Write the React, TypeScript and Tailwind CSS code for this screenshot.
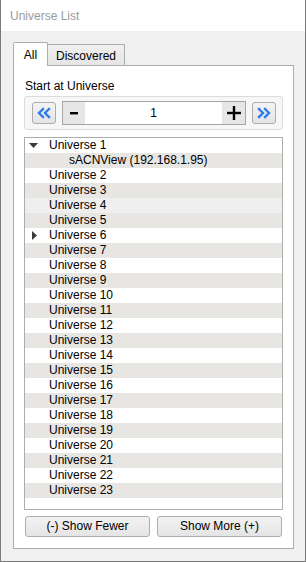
import React from 'react'

const universes = Array.from({ length: 23 }, (_, i) => i + 1)

function DoubleChevron({ dir }: { dir: 'left' | 'right' }) {
 const flip = dir === 'left' ? 'scale(-1,1) translate(-14,0)' : undefined
 return (
  <svg width="14" height="12" viewBox="0 0 14 12">
   <g transform={flip} fill="none" stroke="#2f7be8" strokeWidth="2.4" strokeLinecap="square">
    <path d="M2 2 L6 6 L2 10" />
    <path d="M8 2 L12 6 L8 10" />
   </g>
  </svg>
 )
}

function Row({
 label,
 shade,
 indent,
 arrow,
}: {
 label: string
 shade: string
 indent: string
 arrow?: 'down' | 'right'
}) {
 return (
  <div className={`relative h-[15px] leading-[15px] ${shade} ${indent}`}>
   {arrow === 'down' && (
    <svg className="absolute left-[4px] top-[5px]" width="9" height="5" viewBox="0 0 9 5">
     <path d="M0 0 H9 L4.5 5 Z" fill="#3c3c3c" />
    </svg>
   )}
   {arrow === 'right' && (
    <svg className="absolute left-[7px] top-[3px]" width="5" height="9" viewBox="0 0 5 9">
     <path d="M0 0 L5 4.5 L0 9 Z" fill="#3c3c3c" />
    </svg>
   )}
   {label}
  </div>
 )
}

export default function App() {
 // rows after "Universe 1" + child alternate white / beige, row 4 is hovered
 const rows = [
  { label: 'Universe 1', arrow: 'down' as const, indent: 'pl-[24px]' },
  { label: 'sACNView (192.168.1.95)', indent: 'pl-[44px]' },
  ...universes.slice(1).map((n) => ({
   label: `Universe ${n}`,
   indent: 'pl-[24px]',
   arrow: n === 6 ? ('right' as const) : undefined,
  })),
 ]

 return (
  <div className="flex h-[562px] w-[306px] flex-col border-x border-b border-[#7a7a7a] bg-[#f0f0f0] font-['Liberation_Sans',Arial,sans-serif] text-[12px] text-black">
   <div className="flex h-[31px] shrink-0 items-center bg-white pl-[9px] text-[12px] text-[#9a9a9a]">
    Universe List
   </div>

   <div className="flex min-h-0 flex-1 flex-col pb-[12px] pl-[12px] pr-[11px] pt-[11px]">
    <div className="flex h-[23px] items-end">
     <div className="relative z-10 -mb-px flex h-[24px] w-[35px] items-center justify-center rounded-t-[2px] border border-b-0 border-[#adadad] bg-white pt-[1px]">
      All
     </div>
     <div className="-ml-px flex h-[21px] w-[78px] items-center justify-center border border-b-0 border-[#adadad] bg-gradient-to-b from-[#f0f0f0] to-[#e5e5e5] pt-[2px]">
      Discovered
     </div>
    </div>

    <div className="flex min-h-0 flex-1 flex-col border border-[#adadad] bg-white px-[10px] pb-[11px] pt-[13px]">
     <div className="h-[15px] pl-[1px] leading-[15px]">Start at Universe</div>

     <div className="mt-[2px] flex h-[34px] items-center rounded-[3px] border border-[#dcdcdc] bg-[#f7f7f7] pl-[7px]">
      <button className="flex h-[22px] w-[24px] items-center justify-center rounded-[3px] border border-[#adadad] bg-gradient-to-b from-[#f4f4f4] to-[#e4e4e4]">
       <DoubleChevron dir="left" />
      </button>
      <div className="ml-[6px] flex h-[24px] w-[184px] items-stretch border border-[#a5a5a5] bg-white">
       <div className="flex w-[22px] items-center justify-center bg-[#e6e6e6]">
        <svg width="10" height="3" viewBox="0 0 10 3">
         <rect x="1" y="0" width="8" height="2.4" fill="#000" />
        </svg>
       </div>
       <div className="flex flex-1 items-center justify-center">1</div>
       <div className="flex w-[23px] items-center justify-center bg-[#e6e6e6]">
        <svg width="14" height="14" viewBox="0 0 14 14">
         <rect x="0" y="5.8" width="14" height="2.4" fill="#000" />
         <rect x="5.8" y="0" width="2.4" height="14" fill="#000" />
        </svg>
       </div>
      </div>
      <button className="ml-[6px] flex h-[22px] w-[24px] items-center justify-center rounded-[3px] border border-[#adadad] bg-gradient-to-b from-[#f4f4f4] to-[#e4e4e4]">
       <DoubleChevron dir="right" />
      </button>
     </div>

     <div className="mt-[7px] min-h-0 flex-1 border border-[#adadad] bg-white">
      {rows.map((r, i) => {
       let shade = i % 2 === 1 ? 'bg-[#e8e6e3]' : 'bg-white'
       if (r.label === 'Universe 4') shade = 'bg-[#efefef]'
       return <Row key={r.label} label={r.label} shade={shade} indent={r.indent} arrow={r.arrow} />
      })}
     </div>

     <div className="mt-[6px] flex gap-[7px] px-[1px]">
      <button className="h-[21px] w-[125px] rounded-[3px] border border-[#adadad] bg-gradient-to-b from-[#f3f3f3] to-[#e4e4e4] leading-[19px]">
       (-) Show Fewer
      </button>
      <button className="h-[21px] w-[125px] rounded-[3px] border border-[#adadad] bg-gradient-to-b from-[#f3f3f3] to-[#e4e4e4] leading-[19px]">
       Show More (+)
      </button>
     </div>
    </div>
   </div>
  </div>
 )
}
